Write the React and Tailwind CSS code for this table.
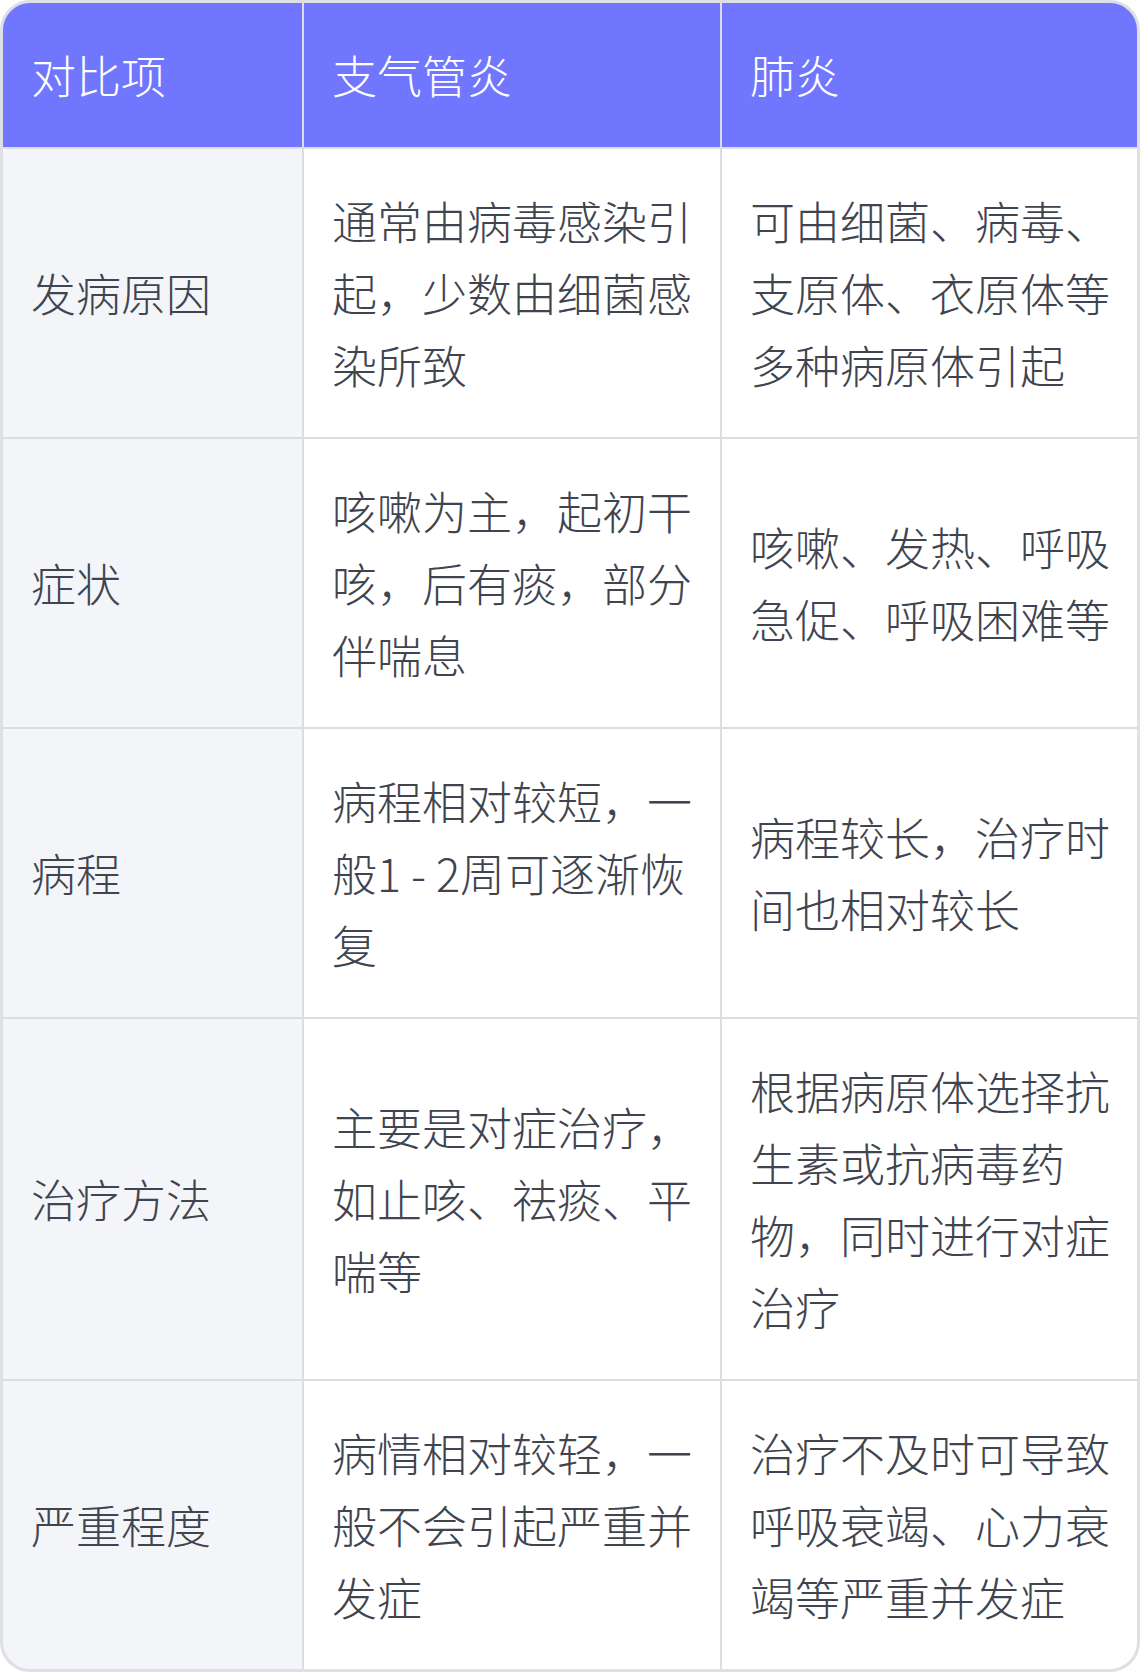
const rows = [
  {
    item: '发病原因',
    a: '通常由病毒感染引起，少数由细菌感染所致',
    b: '可由细菌、病毒、支原体、衣原体等多种病原体引起',
  },
  {
    item: '症状',
    a: '咳嗽为主，起初干咳，后有痰，部分伴喘息',
    b: '咳嗽、发热、呼吸急促、呼吸困难等',
  },
  {
    item: '病程',
    a: '病程相对较短，一般1 - 2周可逐渐恢复',
    b: '病程较长，治疗时间也相对较长',
  },
  {
    item: '治疗方法',
    a: '主要是对症治疗，如止咳、祛痰、平喘等',
    b: '根据病原体选择抗生素或抗病毒药物，同时进行对症治疗',
  },
  {
    item: '严重程度',
    a: '病情相对较轻，一般不会引起严重并发症',
    b: '治疗不及时可导致呼吸衰竭、心力衰竭等严重并发症',
  },
]

function Cell({ children, className = '' }) {
  return (
    <div className={`flex items-center pl-[28px] pr-[26px] py-[36px] ${className}`}>
      <span className="block">{children}</span>
    </div>
  )
}

export default function App() {
  return (
    <div
      className="w-[1140px] text-[45px] leading-[72px] font-light text-[#40444f]"
      style={{ fontFamily: '"Noto Sans CJK SC", "Noto Sans", sans-serif' }}
    >
      <div className="overflow-hidden rounded-[30px] border-[3px] border-[#dfe0e5] bg-[#dcdde3]">
        <div className="grid grid-cols-[299px_416px_1fr] gap-[2px]">
          <Cell className="bg-[#7076fe] text-white">对比项</Cell>
          <Cell className="bg-[#7076fe] text-white">支气管炎</Cell>
          <Cell className="bg-[#7076fe] text-white">肺炎</Cell>
          {rows.map((r) => (
            <div key={r.item} className="contents">
              <Cell className="bg-[#f4f5f9]">{r.item}</Cell>
              <Cell className="bg-white">{r.a}</Cell>
              <Cell className="bg-white">{r.b}</Cell>
            </div>
          ))}
        </div>
      </div>
    </div>
  )
}
